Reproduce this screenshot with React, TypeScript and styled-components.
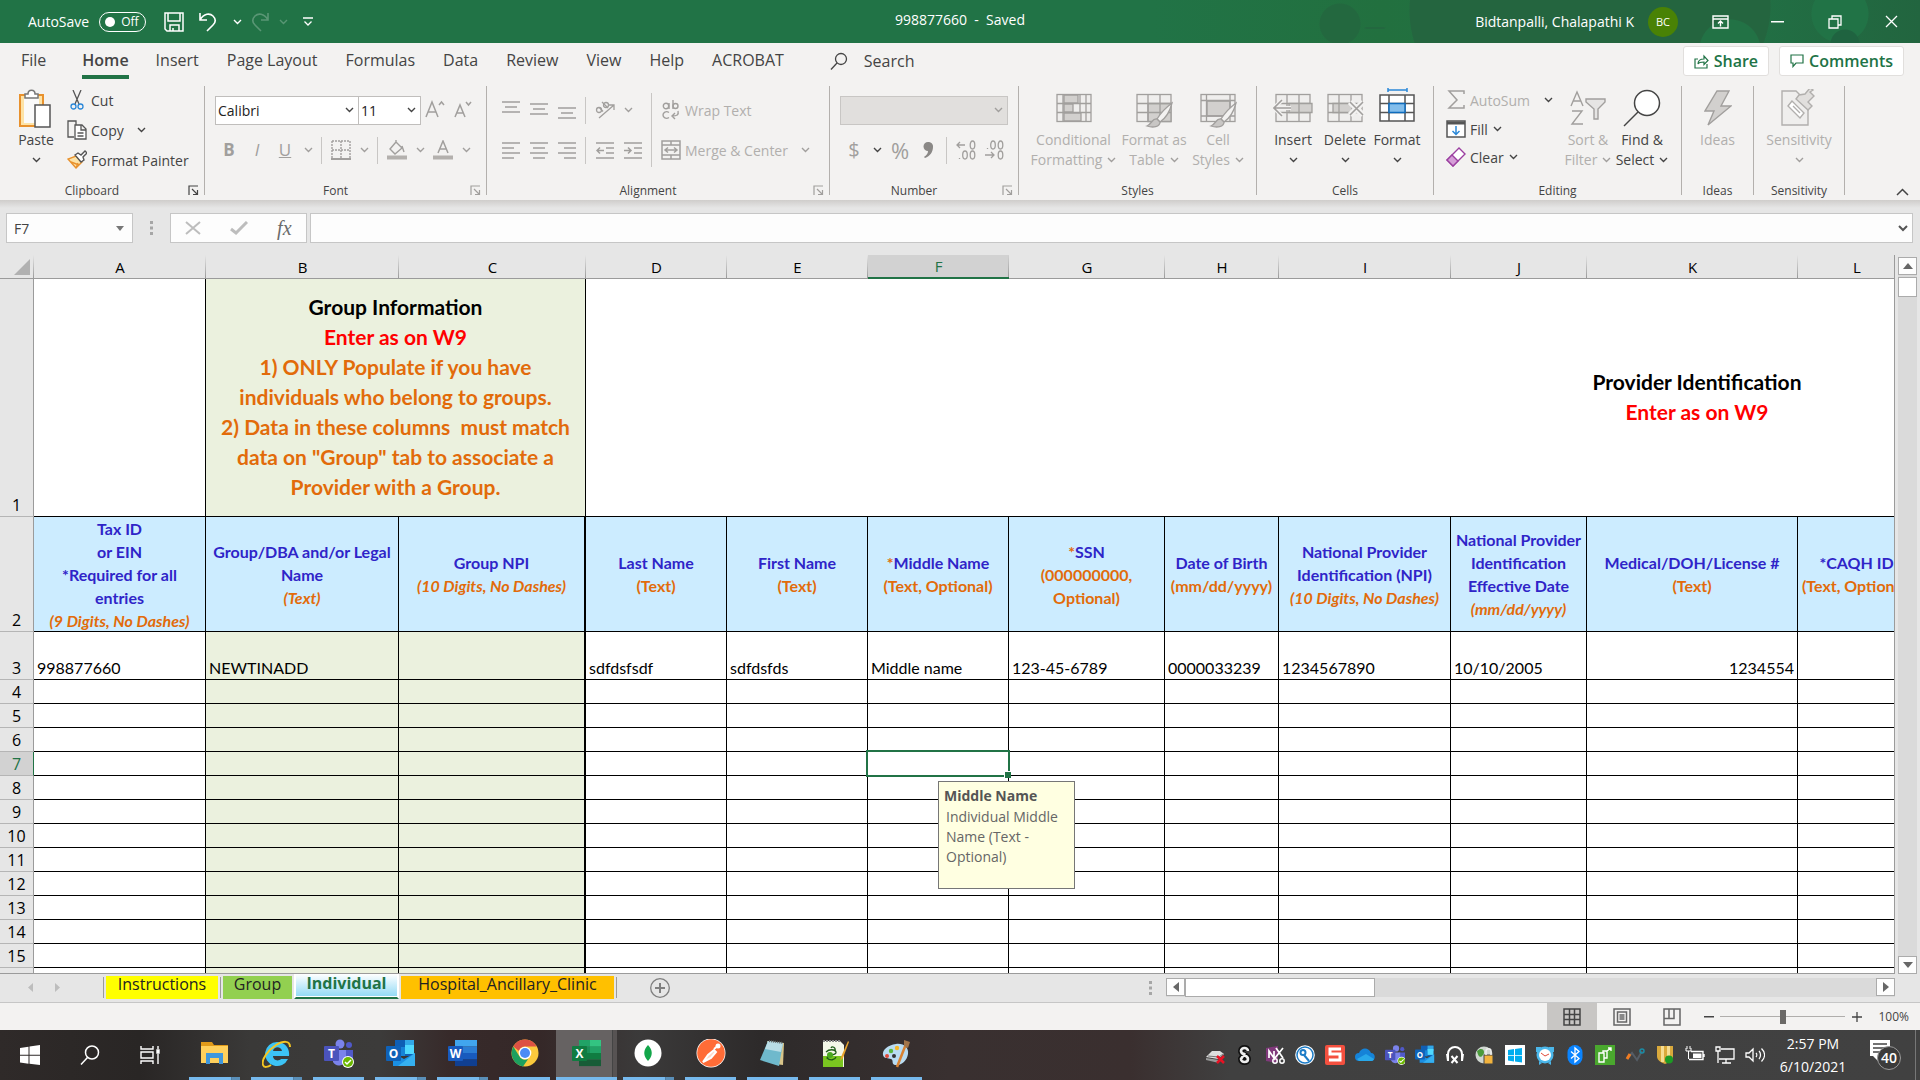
import React from 'react';
import styled, { createGlobalStyle, css } from 'styled-components';

const UI = '"Open Sans", "Noto Sans", sans-serif';
const SHEET = 'Lato, "Open Sans", sans-serif';
const GREEN = '#217346';
const INK = '#444444';
const MUTED = '#b1afad';
const GREY = '#a19f9d';

const Global = createGlobalStyle`
  * { box-sizing: border-box; }
  body { margin: 0; font-family: ${UI}; background: #e6e6e6; }
  button, input, select { font: inherit; color: inherit; }
  button { border: 0; padding: 0; background: none; }
`;

const Window = styled.div`
  display: flex;
  flex-direction: column;
  height: 100vh;
  overflow: hidden;
  font-size: 14px;
  color: ${INK};
`;

/* ---------- shared pieces ---------- */

const ChevronSvg = styled.svg`
  display: block;
  flex: none;
`;
const Chevron = ({ color = INK }: { color?: string }) => (
  <ChevronSvg width="9" height="6" viewBox="0 0 9 6" fill="none" stroke={color} strokeWidth="1.4">
    <path d="M1 1 4.5 4.5 8 1" />
  </ChevronSvg>
);

const Svg = ({ w, h, children, ...rest }: { w: number; h: number; children: React.ReactNode } & React.SVGProps<SVGSVGElement>) => (
  <ChevronSvg as="svg" width={w} height={h} viewBox={`0 0 ${w} ${h}`} fill="none" {...(rest as object)}>
    {children}
  </ChevronSvg>
);

/* ---------- title bar ---------- */

const TitleBar = styled.header`
  display: grid;
  grid-template-columns: 1fr auto 1fr;
  align-items: center;
  height: 43px;
  flex: none;
  color: #fff;
  background:
    radial-gradient(circle at calc(100% - 580px) 24px, #23683f 20px, transparent 21px),
    radial-gradient(ellipse at calc(100% - 545px) 28px, #23683f 26px, transparent 27px),
    radial-gradient(circle at calc(100% - 75px) 44px, #1f6340 14px, transparent 15px),
    radial-gradient(circle at calc(100% - 80px) 14px, #217346 28px, transparent 29px),
    radial-gradient(circle at calc(100% - 190px) 50px, #227245 30px, transparent 31px),
    radial-gradient(circle at calc(100% - 400px) 10px, #24653f 110px, transparent 111px),
    radial-gradient(circle at calc(100% - 250px) 6px, #24653f 100px, transparent 101px),
    linear-gradient(90deg, ${GREEN} 60%, #22703f 72%, #217346 88%, #22653f 100%);
`;
const QuickAccess = styled.div`
  display: flex;
  align-items: center;
  padding-left: 28px;
`;
const AutoSave = styled.label`
  display: flex;
  align-items: center;
  gap: 10px;
  margin-right: 18px;
  font-size: 14px;
`;
const Switch = styled.span`
  display: flex;
  align-items: center;
  gap: 6px;
  width: 47px;
  height: 20px;
  padding-left: 5px;
  border: 1px solid #fff;
  border-radius: 10px;
  font-size: 12px;
`;
const SwitchInput = styled.input`
  appearance: none;
  width: 10px;
  height: 10px;
  margin: 0;
  border-radius: 50%;
  background: #fff;
`;
const QuickButton = styled.button<{ $w: number; $dim?: boolean }>`
  display: flex;
  align-items: center;
  justify-content: center;
  width: ${(p) => p.$w}px;
  height: 30px;
  opacity: ${(p) => (p.$dim ? 0.25 : 1)};
`;
const DocTitle = styled.h1`
  margin: 0;
  padding-bottom: 4px;
  font-size: 14px;
  line-height: 20px;
  font-weight: 400;
  white-space: pre;
`;
const Account = styled.div`
  display: flex;
  align-items: center;
  justify-content: flex-end;
  font-size: 14px;
`;
const Avatar = styled.span`
  display: grid;
  place-items: center;
  width: 30px;
  height: 30px;
  margin: 0 14px;
  border-radius: 50%;
  background: #498205;
  font-size: 11px;
`;
const WindowButton = styled.button`
  display: grid;
  place-items: center;
  width: 57px;
  height: 43px;
`;

const TitleArea = () => (
  <TitleBar>
    <QuickAccess>
      <AutoSave>
        AutoSave
        <Switch>
          <SwitchInput type="checkbox" role="switch" />
          Off
        </Switch>
      </AutoSave>
      <QuickButton $w={20} aria-label="Save">
        <Svg w={20} h={20} stroke="#fff" strokeWidth="1.5">
          <path d="M1 1h18v18H3l-2-2zM4 1v8h12V1M6 19v-6h9v6M9 19v-3" />
        </Svg>
      </QuickButton>
      <QuickButton $w={48} aria-label="Undo">
        <Svg w={20} h={20} stroke="#fff" strokeWidth="1.6">
          <path d="M2 1v7h7M2 8c4-7 10-7 13-4s3 6 0 9l-6 6" />
        </Svg>
      </QuickButton>
      <QuickButton $w={10} aria-label="Undo history">
        <Chevron color="#fff" />
      </QuickButton>
      <QuickButton $w={36} $dim aria-label="Redo">
        <Svg w={20} h={20} stroke="#fff" strokeWidth="1.6">
          <path d="M18 1v7h-7M18 8C14 1 8 1 5 4s-3 6 0 9l6 6" />
        </Svg>
      </QuickButton>
      <QuickButton $w={10} $dim aria-label="Redo history">
        <Chevron color="#fff" />
      </QuickButton>
      <QuickButton $w={40} aria-label="Customize toolbar">
        <Svg w={10} h={10} stroke="#fff" strokeWidth="1.3">
          <path d="M0 1h10M1.500 4.500 5 8l3.500-3.500" />
        </Svg>
      </QuickButton>
    </QuickAccess>
    <DocTitle>998877660  -  Saved</DocTitle>
    <Account>
      Bidtanpalli, Chalapathi K
      <Avatar>BC</Avatar>
      <WindowButton aria-label="Ribbon display options">
        <Svg w={17} h={14} stroke="#fff" strokeWidth="1.4">
          <path d="M1 1h15v12H1zM1 4h15M8.500 11.500V6M6 8.500 8.500 6 11 8.500" />
        </Svg>
      </WindowButton>
      <WindowButton aria-label="Minimize">
        <Svg w={13} h={2} fill="#fff"><rect width="13" height="1.500" /></Svg>
      </WindowButton>
      <WindowButton aria-label="Restore">
        <Svg w={14} h={14} stroke="#fff" strokeWidth="1.3">
          <path d="M1 4h9v9H1zM4 4V1h9v9h-3" />
        </Svg>
      </WindowButton>
      <WindowButton aria-label="Close">
        <Svg w={13} h={13} stroke="#fff" strokeWidth="1.3"><path d="m1 1 11 11M12 1 1 12" /></Svg>
      </WindowButton>
    </Account>
  </TitleBar>
);

/* ---------- ribbon tabs ---------- */

const TabRow = styled.nav`
  display: flex;
  align-items: center;
  height: 42px;
  flex: none;
  padding: 0 16px 6px 7px;
  background: #f3f2f1;
  font-size: 16px;
`;
const RibbonTab = styled.button<{ $active?: boolean }>`
  height: 36px;
  margin: 0 14px;
  padding-top: 2px;
  white-space: nowrap;
  border-bottom: 4px solid transparent;
  ${(p) => p.$active && css`
    font-weight: 600;
    margin: 0 13px 0 22px;
    border-bottom-color: ${GREEN};
  `}
`;
const SearchBox = styled.label`
  display: flex;
  align-items: center;
  gap: 16px;
  margin-left: 32px;
  flex: 1;
`;
const SearchInput = styled.input`
  width: 160px;
  padding: 0;
  border: 0;
  outline: 0;
  background: none;
  &::placeholder { color: ${INK}; opacity: 1; }
`;
const ActionButton = styled.button`
  display: flex;
  align-items: center;
  gap: 5px;
  height: 30px;
  margin-left: 10px;
  padding: 0 10px;
  border: 1px solid #e1dfdd;
  border-radius: 3px;
  background: #fff;
  color: ${GREEN};
  font-weight: 600;
`;

const tabsBefore = ['File'];
const tabsAfter = ['Insert', 'Page Layout', 'Formulas', 'Data', 'Review', 'View', 'Help', 'ACROBAT'];

const Tabs = () => (
  <TabRow>
    {tabsBefore.map((t) => <RibbonTab key={t}>{t}</RibbonTab>)}
    <RibbonTab $active>Home</RibbonTab>
    {tabsAfter.map((t) => <RibbonTab key={t}>{t}</RibbonTab>)}
    <SearchBox>
      <Svg w={18} h={18} stroke={INK} strokeWidth="1.3">
        <circle cx="11" cy="7" r="5.500" /><path d="m7 11-6 6.500" />
      </Svg>
      <SearchInput placeholder="Search" aria-label="Search" />
    </SearchBox>
    <ActionButton>
      <Svg w={15} h={15} stroke={GREEN} strokeWidth="1.2">
        <path d="M4 5H1v9h12v-4M4 10c0-4 3-5 6-5V2l4 4.500-4 4V8c-3 0-5 0-6 2z" />
      </Svg>
      Share
    </ActionButton>
    <ActionButton>
      <Svg w={14} h={14} stroke={GREEN} strokeWidth="1.2"><path d="M1 1h12v8H6l-3 3.500V9H1z" /></Svg>
      Comments
    </ActionButton>
  </TabRow>
);

/* ---------- ribbon ---------- */

const RibbonBar = styled.div`
  display: flex;
  height: 115px;
  flex: none;
  background: #f3f2f1;
`;
const GroupBox = styled.section`
  display: flex;
  flex-direction: column;
`;
const GroupBody = styled.div<{ $pad?: number }>`
  display: flex;
  height: 96px;
  padding: 0 ${(p) => p.$pad ?? 10}px;
`;
const GroupFooter = styled.div`
  display: flex;
  align-items: center;
  height: 18px;
  font-size: 12px;
`;
const GroupName = styled.span`
  flex: 1;
  text-align: center;
`;
const Launcher = styled.button`
  width: 20px;
  height: 12px;
  padding-left: 4px;
`;
const GroupLine = styled.div`
  width: 1px;
  height: 109px;
  margin-top: 1px;
  background: #b3b0ad;
`;
const Stack = styled.div<{ $top?: number; $gap?: number; $w?: number }>`
  display: flex;
  flex-direction: column;
  align-items: flex-start;
  padding-top: ${(p) => p.$top ?? 0}px;
  gap: ${(p) => p.$gap ?? 0}px;
  width: ${(p) => (p.$w ? `${p.$w}px` : 'auto')};
`;
const Row = styled.div`
  display: flex;
  align-items: center;
  height: 30px;
`;
const BigButton = styled.button<{ $w: number; $off?: boolean }>`
  display: flex;
  flex-direction: column;
  align-items: center;
  width: ${(p) => p.$w}px;
  padding-top: 3px;
  line-height: 20px;
  color: ${(p) => (p.$off ? MUTED : INK)};
  white-space: nowrap;
`;
const BigIcon = styled.span`
  display: grid;
  place-items: center;
  height: 40px;
  margin-bottom: 2px;
`;
const BigLine = styled.span`
  display: flex;
  align-items: center;
  gap: 5px;
  height: 20px;
`;
const LineButton = styled.button<{ $h?: number; $off?: boolean; $gap?: number }>`
  display: flex;
  align-items: center;
  gap: ${(p) => p.$gap ?? 5}px;
  height: ${(p) => p.$h ?? 30}px;
  color: ${(p) => (p.$off ? MUTED : INK)};
  white-space: nowrap;
`;
const LineIcon = styled.span`
  display: grid;
  place-items: center;
  width: 24px;
  margin-right: -3px;
`;
const Tool = styled.button<{ $size?: number }>`
  display: grid;
  place-items: center;
  width: 28px;
  height: 28px;
  color: ${GREY};
  font-size: ${(p) => p.$size ?? 17}px;
  line-height: 28px;
`;
const Drop = styled.button<{ $apart?: boolean }>`
  display: grid;
  place-items: center;
  width: 18px;
  height: 28px;
  margin-left: ${(p) => (p.$apart ? 9 : 0)}px;
`;
const Split = styled.span`
  width: 1px;
  height: 27px;
  margin: 0 5px 0 4px;
  background: #c8c6c4;
`;
const TallSplit = styled.span`
  width: 1px;
  height: 74px;
  margin: 8px 7px 0 4px;
  background: #c8c6c4;
`;
const Picker = styled.span<{ $w: number; $off?: boolean }>`
  display: flex;
  align-items: center;
  width: ${(p) => p.$w}px;
  height: 29px;
  padding-right: 4px;
  border: 1px solid ${(p) => (p.$off ? '#c8c6c4' : '#c0bebc')};
  background: ${(p) => (p.$off ? '#e1dfdd' : '#fff')};
  & + & { border-left: 0; }
`;
const PickerSelect = styled.select`
  flex: 1;
  min-width: 0;
  height: 27px;
  padding: 0 2px;
  border: 0;
  appearance: none;
  background: none;
  color: #222;
`;

const LaunchIcon = ({ color = GREY }: { color?: string }) => (
  <Svg w={11} h={11} stroke={color} strokeWidth="1.2"><path d="M1 10V1h9M4 4l5 5M9.500 5v4.500H5" /></Svg>
);

const Group = ({ name, pad, launch, children }: { name: string; pad?: number; launch?: string; children: React.ReactNode }) => (
  <>
    <GroupBox aria-label={name}>
      <GroupBody $pad={pad}>{children}</GroupBody>
      <GroupFooter>
        <GroupName>{name}</GroupName>
        {launch && <Launcher aria-label={`${name} settings`}><LaunchIcon color={launch} /></Launcher>}
      </GroupFooter>
    </GroupBox>
    <GroupLine />
  </>
);

const Lines = ({ d }: { d: string }) => (
  <Svg w={18} h={18} stroke={GREY} strokeWidth="1.500"><path d={d} /></Svg>
);

const GridIcon = ({ fillCells, over }: { fillCells: React.ReactNode; over?: React.ReactNode }) => (
  <Svg w={40} h={40} stroke={GREY} strokeWidth="1.300">
    <rect x="3" y="6.500" width="34" height="27" fill="#efeeed" />
    {fillCells}
    {over}
  </Svg>
);
const Brush = () => (
  <>
    <path d="M38 15c-8 6-12 11-15 16l3 3c6-4 10-11 12-19z" fill="#f3f2f1" />
    <path d="M23 31c-5-1-5 5-10 7 6 2 13 1 13-4z" fill="#c8c6c4" />
  </>
);

const Ribbon = () => (
  <RibbonBar>
    <Group name="Clipboard" pad={7} launch={INK}>
      <BigButton $w={58}>
        <BigIcon>
          <Svg w={36} h={40} strokeWidth="1.500">
            <path d="M2 7h23v31H2z" fill="#fde3a7" stroke="#e8912d" strokeWidth="2" />
            <path d="M6 10h15v25H6z" fill="#fafafa" />
            <path d="M7 10V6h3c0-5 7-5 7 0h3v4z" fill="#fff" stroke="#777" />
            <path d="M17 17h15v22H17z" fill="#fff" stroke="#555" />
          </Svg>
        </BigIcon>
        <BigLine>Paste</BigLine>
        <BigLine><Chevron /></BigLine>
      </BigButton>
      <Stack $w={132}>
        <LineButton>
          <LineIcon>
            <Svg w={14} h={20} stroke="#555" strokeWidth="1.300">
              <path d="M3 0l6 14M11 0 5 14" />
              <circle cx="3.500" cy="16.500" r="2.500" stroke="#2b88d8" /><circle cx="10.500" cy="16.500" r="2.500" stroke="#2b88d8" />
            </Svg>
          </LineIcon>
          Cut
        </LineButton>
        <Row>
          <LineButton>
            <LineIcon>
              <Svg w={20} h={20} stroke="#555" strokeWidth="1.300">
                <path d="M7 17H1V1h8v4" /><path d="M8 5h7l4 4v10H8zM14 5v5h5M10.500 13h6M10.500 16h6" fill="#fff" />
              </Svg>
            </LineIcon>
            Copy
          </LineButton>
          <Drop $apart aria-label="Copy options"><Chevron /></Drop>
        </Row>
        <LineButton>
          <LineIcon>
            <Svg w={20} h={20} strokeWidth="1.400">
              <path d="M1 9l8 9 6-6-6-6z" fill="#fde3a7" stroke="#e8912d" /><path d="M4 12l8 3M9 18l2-5" stroke="#e8912d" />
              <path d="M8 5l3-2 3 2 4-4 2 2-4 4 1 3-3 2z" fill="#fff" stroke="#555" />
            </Svg>
          </LineIcon>
          Format Painter
        </LineButton>
      </Stack>
    </Group>

    <Group name="Font" launch={GREY}>
      <Stack $top={10} $gap={10} $w={261}>
        <Row>
          <Picker $w={144}>
            <PickerSelect aria-label="Font name"><option>Calibri</option></PickerSelect>
            <Chevron />
          </Picker>
          <Picker $w={62}>
            <PickerSelect aria-label="Font size"><option>11</option></PickerSelect>
            <Chevron />
          </Picker>
          <Tool aria-label="Increase font size">
            <Svg w={20} h={20} stroke={GREY} strokeWidth="1.500"><path d="M1 17 7 2l6 15M3 12h8M14 5l2.500-3L19 5" /></Svg>
          </Tool>
          <Tool aria-label="Decrease font size">
            <Svg w={18} h={20} stroke={GREY} strokeWidth="1.500"><path d="M1 17 6 5l5 12M3 13h6M12 2l2.500 3L17 2" /></Svg>
          </Tool>
        </Row>
        <Row>
          <Tool aria-label="Bold"><b>B</b></Tool>
          <Tool aria-label="Italic"><i>I</i></Tool>
          <Tool aria-label="Underline"><u>U</u></Tool>
          <Drop aria-label="Underline style"><Chevron color={GREY} /></Drop>
          <Split />
          <Tool aria-label="Borders">
            <Svg w={20} h={20} stroke={GREY} strokeWidth="1.400">
              <path d="M1 1h18M1 10h18M1 1v17M10 1v17M19 1v17" strokeDasharray="2 1" /><path d="M0 19h20" strokeWidth="2" />
            </Svg>
          </Tool>
          <Drop aria-label="Border style"><Chevron color={GREY} /></Drop>
          <Split />
          <Tool aria-label="Fill color">
            <Svg w={20} h={20} stroke={GREY} strokeWidth="1.400">
              <path d="M9 2 3 9l5 5 7-6-6-6zM9 2V0M15 6l2 6" /><path d="M0 17.500h20" strokeWidth="4" stroke="#b3b0ad" />
            </Svg>
          </Tool>
          <Drop aria-label="Fill color options"><Chevron color={GREY} /></Drop>
          <Tool aria-label="Font color">
            <Svg w={20} h={20} stroke={GREY} strokeWidth="1.500">
              <path d="M5 13 10 1l5 12M7 9h6" /><path d="M0 17.500h20" strokeWidth="4" stroke="#b3b0ad" />
            </Svg>
          </Tool>
          <Drop aria-label="Font color options"><Chevron color={GREY} /></Drop>
        </Row>
      </Stack>
    </Group>

    <Group name="Alignment" launch={GREY}>
      <Stack $top={10} $gap={10}>
        <Row>
          <Tool aria-label="Top align"><Lines d="M0 1h18M3 6h12M0 11h18" /></Tool>
          <Tool aria-label="Middle align"><Lines d="M0 3h18M3 8h12M0 13h18" /></Tool>
          <Tool aria-label="Bottom align"><Lines d="M0 7h18M3 12h12M0 17h18" /></Tool>
          <Split />
          <Tool aria-label="Orientation">
            <Svg w={20} h={20} stroke={GREY} strokeWidth="1.300">
              <path d="M4 18 19 5M14 5h5v5" />
              <circle cx="4" cy="10" r="2.500" /><path d="m4.500 7.500 3.500 4M7 2l6 6" /><circle cx="11" cy="5" r="2.500" />
            </Svg>
          </Tool>
          <Drop aria-label="Orientation options"><Chevron color={GREY} /></Drop>
        </Row>
        <Row>
          <Tool aria-label="Align left"><Lines d="M0 2h18M0 7h12M0 12h18M0 17h12" /></Tool>
          <Tool aria-label="Center"><Lines d="M0 2h18M3 7h12M0 12h18M3 17h12" /></Tool>
          <Tool aria-label="Align right"><Lines d="M0 2h18M6 7h12M0 12h18M6 17h12" /></Tool>
          <Split />
          <Tool aria-label="Decrease indent"><Lines d="M0 2h18M10 7h8M10 12h8M0 17h18M8 9.500H1M4 6.500l-3 3 3 3" /></Tool>
          <Tool aria-label="Increase indent"><Lines d="M0 2h18M10 7h8M10 12h8M0 17h18M0 9.500h7M4 6.500l3 3-3 3" /></Tool>
        </Row>
      </Stack>
      <TallSplit />
      <Stack $top={10} $gap={10} $w={160}>
        <LineButton $off>
          <LineIcon>
            <Svg w={18} h={20} stroke={GREY} strokeWidth="1.400">
              <circle cx="4" cy="6" r="2.700" /><path d="M7 3v6M11 0v9" /><circle cx="13.500" cy="6" r="2.500" />
              <path d="M7 12.500c-3-2-6 0-6 2.500s3 4.500 6 2.500M16 11c1 4-1 5-6 5M13 13l-3 3 3 3" />
            </Svg>
          </LineIcon>
          Wrap Text
        </LineButton>
        <Row>
          <LineButton $off>
            <LineIcon>
              <Svg w={20} h={20} stroke={GREY} strokeWidth="1.500">
                <path d="M1 1h18v18H1zM1 5h18M1 15h18M10 1v4M10 15v4" /><path d="M4 10h12M7 7.500 4 10l3 2.500M13 7.500l3 2.500-3 2.500" />
              </Svg>
            </LineIcon>
            Merge &amp; Center
          </LineButton>
          <Drop $apart aria-label="Merge options"><Chevron color={GREY} /></Drop>
        </Row>
      </Stack>
    </Group>

    <Group name="Number" launch={GREY}>
      <Stack $top={10} $gap={10}>
        <Row>
          <Picker $w={168} $off>
            <PickerSelect aria-label="Number format" disabled />
            <Chevron color={GREY} />
          </Picker>
        </Row>
        <Row>
          <Tool $size={20} aria-label="Accounting format">$</Tool>
          <Drop aria-label="Accounting options"><Chevron /></Drop>
          <Tool $size={22} aria-label="Percent">%</Tool>
          <Tool aria-label="Comma style">
            <Svg w={10} h={16} fill="#8a8886"><path d="M5 0a4.500 4.500 0 0 1 5 5c0 5-3 9-8 11l-1-1c3-2 4-4 4-6a4.500 4.500 0 0 1 0-9z" /></Svg>
          </Tool>
          <Split />
          <Tool aria-label="Increase decimal">
            <Svg w={20} h={20} stroke={GREY} strokeWidth="1.300">
              <path d="M9 5H1M4 2 1 5l3 3M3.500 18v1" /><ellipse cx="16.500" cy="5" rx="2.300" ry="4" />
              <ellipse cx="9" cy="15" rx="2.300" ry="4" /><ellipse cx="16.500" cy="15" rx="2.300" ry="4" />
            </Svg>
          </Tool>
          <Tool aria-label="Decrease decimal">
            <Svg w={20} h={20} stroke={GREY} strokeWidth="1.300">
              <path d="M1 15h9M7 12l3 3-3 3M3.500 8v1" /><ellipse cx="9" cy="5" rx="2.300" ry="4" />
              <ellipse cx="16.500" cy="5" rx="2.300" ry="4" /><ellipse cx="16.500" cy="15" rx="2.300" ry="4" />
            </Svg>
          </Tool>
        </Row>
      </Stack>
    </Group>

    <Group name="Styles">
      <BigButton $w={89} $off>
        <BigIcon>
          <GridIcon fillCells={<>
            <path d="M3 15.500h34M3 24.500h34M9 6.500v27M26 6.500v27M32 6.500v27" />
            <path d="M10 7h14v8H10zM10 16h9v8h-9zM10 25h17v8H10z" fill="#d2d0ce" />
          </>} />
        </BigIcon>
        <BigLine>Conditional</BigLine>
        <BigLine>Formatting <Chevron color={GREY} /></BigLine>
      </BigButton>
      <BigButton $w={72} $off>
        <BigIcon>
          <GridIcon fillCells={<><path d="M14 15.500h23v18H14z" fill="#d2d0ce" /><path d="M3 15.500h34M3 24.500h34M14 6.500v27M26 6.500v27" /></>} over={<Brush />} />
        </BigIcon>
        <BigLine>Format as</BigLine>
        <BigLine>Table <Chevron color={GREY} /></BigLine>
      </BigButton>
      <BigButton $w={56} $off>
        <BigIcon>
          <GridIcon fillCells={<><path d="M9 13h23v15H9z" fill="#d2d0ce" /><path d="M3 12.500h34M3 28h34M8.500 6.500v27M32 6.500v27" /></>} over={<Brush />} />
        </BigIcon>
        <BigLine>Cell</BigLine>
        <BigLine>Styles <Chevron color={GREY} /></BigLine>
      </BigButton>
    </Group>

    <Group name="Cells">
      <BigButton $w={52}>
        <BigIcon>
          <GridIcon
            fillCells={<><path d="M3 15.500h34M3 24.500h34M14 6.500v27M26 6.500v27" /><path d="M16 15.500h23v9H16zM26 15.500v9" fill="#d2d0ce" /></>}
            over={<><path d="M18 20H2M9 12l-8 8 8 8" stroke="#f3f2f1" strokeWidth="4" /><path d="M18 20H2M9 12l-8 8 8 8" strokeWidth="1.600" /></>}
          />
        </BigIcon>
        <BigLine>Insert</BigLine>
        <BigLine><Chevron /></BigLine>
      </BigButton>
      <BigButton $w={52}>
        <BigIcon>
          <GridIcon
            fillCells={<><path d="M3 15.500h34M3 24.500h34M14 6.500v9M26 6.500v9M14 24.500v9M26 24.500v9" /><path d="M8 15.500h19v9H8zM14 15.500v9" fill="#d2d0ce" /></>}
            over={<><path d="m25 14 13 13M38 14 25 27" stroke="#f3f2f1" strokeWidth="6" /><path d="m25 14 13 13M38 14 25 27" strokeWidth="1.600" /></>}
          />
        </BigIcon>
        <BigLine>Delete</BigLine>
        <BigLine><Chevron /></BigLine>
      </BigButton>
      <BigButton $w={52}>
        <BigIcon>
          <Svg w={40} h={40} stroke="#555" strokeWidth="1.500">
            <path d="M3 7h34v26H3z" fill="#fff" />
            <path d="M3 15.500h34M3 24.500h34M12 7v26M28 7v26" />
            <path d="M12 15.500h16v9H12z" fill="#83beec" stroke="#0f6cbd" />
            <path d="M11 2h19M11 0v4M30 0v4" stroke="#2b88d8" />
          </Svg>
        </BigIcon>
        <BigLine>Format</BigLine>
        <BigLine><Chevron /></BigLine>
      </BigButton>
    </Group>

    <Group name="Editing">
      <Stack $w={119}>
        <Row>
          <LineButton $h={29} $off>
            <LineIcon>
              <Svg w={18} h={20} stroke={GREY} strokeWidth="1.500"><path d="M17 4V1H2l8 9-8 8h15v-3" /></Svg>
            </LineIcon>
            AutoSum
          </LineButton>
          <Drop $apart aria-label="AutoSum options"><Chevron /></Drop>
        </Row>
        <LineButton $h={28}>
          <LineIcon>
            <Svg w={20} h={18} stroke="#555" strokeWidth="1.500">
              <path d="M1 1h18v16H1z" fill="#fff" /><path d="M1 3h18" strokeWidth="3" /><path d="M10 6v8M6.500 11l3.500 3.500 3.500-3.500" stroke="#2b88d8" />
            </Svg>
          </LineIcon>
          Fill <Chevron />
        </LineButton>
        <LineButton $h={28}>
          <LineIcon>
            <Svg w={20} h={20} stroke="#9b3fa0" strokeWidth="1.400">
              <path d="M13 1 1 13l6 6L19 7z" fill="#fff" /><path d="M6 8l-5 5 6 6 5-5z" fill="#d59ed7" />
            </Svg>
          </LineIcon>
          Clear <Chevron />
        </LineButton>
      </Stack>
      <BigButton $w={50} $off>
        <BigIcon>
          <Svg w={38} h={38} stroke={GREY} strokeWidth="1.400">
            <path d="M2 17 8 3l6 14M4 12h8M3 22h10L3 35h11" />
            <path d="M17 10h19v3l-7 7v10h-4V20l-8-7z" fill="#e6e5e4" />
          </Svg>
        </BigIcon>
        <BigLine>Sort &amp;</BigLine>
        <BigLine>Filter <Chevron color={GREY} /></BigLine>
      </BigButton>
      <BigButton $w={58}>
        <BigIcon>
          <Svg w={38} h={38} stroke={INK} strokeWidth="1.500">
            <circle cx="24" cy="14" r="12.500" fill="#fff" /><path d="M15 23 1 37" />
          </Svg>
        </BigIcon>
        <BigLine>Find &amp;</BigLine>
        <BigLine>Select <Chevron /></BigLine>
      </BigButton>
    </Group>

    <Group name="Ideas" pad={0}>
      <BigButton $w={71} $off>
        <BigIcon>
          <Svg w={28} h={36} stroke={GREY} strokeWidth="1.400"><path d="M13 1h12l-8 15h10L4 35l6-14H1z" fill="#d2d0ce" /></Svg>
        </BigIcon>
        <BigLine>Ideas</BigLine>
      </BigButton>
    </Group>

    <Group name="Sensitivity" pad={0}>
      <BigButton $w={90} $off>
        <BigIcon>
          <Svg w={36} h={38} stroke={MUTED} strokeWidth="1.400">
            <path d="M1 2h14l12 12v22H1z" fill="#efeeed" />
            <path d="M11 12 7 17l12 12 4-5zM12 17l7 7" fill="#fff" />
            <path d="M18 6l-3 4 12 11 4-4-4-4 6-6-4-4 3-2-3-2-5 6z" fill="#e1dfdd" />
          </Svg>
        </BigIcon>
        <BigLine>Sensitivity</BigLine>
        <BigLine><Chevron color={GREY} /></BigLine>
      </BigButton>
    </Group>
    <Collapse aria-label="Collapse ribbon">
      <Svg w={13} h={8} stroke={INK} strokeWidth="1.500"><path d="M1 7l5.500-5.500L12 7" /></Svg>
    </Collapse>
  </RibbonBar>
);
const Collapse = styled.button`
  align-self: flex-end;
  margin: 0 11px 4px auto;
`;

/* ---------- formula bar ---------- */

const FormulaRow = styled.div`
  display: flex;
  height: 55px;
  flex: none;
  padding: 13px 7px 12px 6px;
  background: linear-gradient(#cfcdcb, #e6e6e6 8px);
`;
const NameBox = styled.label`
  display: flex;
  align-items: center;
  width: 127px;
  padding: 0 8px 0 7px;
  border: 1px solid #c6c6c6;
  background: #fdfdfd;
`;
const PlainInput = styled.input`
  flex: 1;
  min-width: 0;
  border: 0;
  padding: 0;
  outline: 0;
  background: none;
`;
const Grip = styled.span`
  display: grid;
  place-items: center;
  width: 37px;
`;
const FxBox = styled.div`
  display: flex;
  align-items: center;
  justify-content: space-around;
  width: 137px;
  margin-right: 3px;
  border: 1px solid #c6c6c6;
  background: #fdfdfd;
`;
const FxButton = styled.button`
  font: italic 20px/26px "Liberation Serif", serif;
  color: #6b6b6b;
`;
const FormulaBox = styled.label`
  display: flex;
  align-items: center;
  flex: 1;
  padding: 0 4px;
  border: 1px solid #c6c6c6;
  background: #fdfdfd;
`;
const GripDots = () => (
  <Svg w={3} h={14} fill="#a6a6a6"><path d="M0 0h3v3H0zM0 5.500h3v3H0zM0 11h3v3H0z" /></Svg>
);

const FormulaBar = () => (
  <FormulaRow>
    <NameBox>
      <PlainInput aria-label="Name box" defaultValue="F7" />
      <Svg w={8} h={5} fill="#777"><path d="M0 0h8L4 5z" /></Svg>
    </NameBox>
    <Grip><GripDots /></Grip>
    <FxBox>
      <button aria-label="Cancel"><Svg w={16} h={14} stroke="#bdbdbd" strokeWidth="2"><path d="m1 1 14 12M15 1 1 13" /></Svg></button>
      <button aria-label="Enter"><Svg w={18} h={14} stroke="#bdbdbd" strokeWidth="3"><path d="m1 8 5 4L17 1" /></Svg></button>
      <FxButton aria-label="Insert function">fx</FxButton>
    </FxBox>
    <FormulaBox>
      <PlainInput aria-label="Formula" />
      <Svg w={10} h={7} stroke="#555" strokeWidth="2"><path d="m1 1 4 4 4-4" /></Svg>
    </FormulaBox>
  </FormulaRow>
);

/* ---------- sheet ---------- */

const Workspace = styled.main`
  display: flex;
  flex: 1;
  min-height: 0;
  background: #e6e6e6;
`;
const SheetView = styled.div`
  flex: 1;
  min-width: 0;
  overflow: hidden;
  border-right: 1px solid #9b9b9b;
  border-bottom: 1px solid #9b9b9b;
`;
const columns: [string, number][] = [
  ['A', 172], ['B', 193], ['C', 187], ['D', 141], ['E', 141], ['F', 141], ['G', 156],
  ['H', 114], ['I', 172], ['J', 136], ['K', 211], ['L', 118], ['', 893],
];
const Sheet = styled.table<{ $w: number }>`
  width: ${(p) => p.$w}px;
  table-layout: fixed;
  border-collapse: separate;
  border-spacing: 0;
  background: #fff;
  font-family: ${SHEET};
  font-size: 16px;
  line-height: 22px;
  color: #000;
`;
const Col = styled.col<{ $w: number }>`
  width: ${(p) => p.$w}px;
`;
const ColHead = styled.th<{ $on?: boolean }>`
  height: 24px;
  padding: 0;
  border-bottom: 1px solid #9b9b9b;
  background:
    linear-gradient(transparent, #9b9b9b) right / 1px 100% no-repeat,
    ${(p) => (p.$on ? '#d2d2d2' : '#e6e6e6')};
  font-family: ${UI};
  font-size: 15px;
  font-weight: 400;
  ${(p) => p.$on && css`
    border-bottom: 2px solid ${GREEN};
    color: ${GREEN};
  `}
`;
const Corner = styled(ColHead)`
  background: linear-gradient(transparent, #9b9b9b) right / 1px 100% no-repeat, #e6e6e6;
`;
const CornerMark = styled.svg`
  display: block;
  margin-left: 14px;
`;
const RowHead = styled.th<{ $h: number; $on?: boolean }>`
  height: ${(p) => p.$h}px;
  padding: 0;
  vertical-align: bottom;
  font-family: ${UI};
  font-weight: 400;
  border-right: 1px solid ${(p) => (p.$on ? GREEN : '#9b9b9b')};
  border-bottom: 1px solid #b5b5b5;
  color: ${(p) => (p.$on ? GREEN : '#000')};
  background: ${(p) => (p.$on ? '#d2d2d2' : '#e6e6e6')};
`;
const Cell = styled.td<{ $tint?: boolean; $thick?: boolean; $right?: boolean }>`
  position: relative;
  padding: 0 3px;
  vertical-align: bottom;
  white-space: nowrap;
  text-align: ${(p) => (p.$right ? 'right' : 'left')};
  border-right: ${(p) => (p.$thick ? 2 : 1)}px solid #000;
  border-bottom: 1px solid #000;
  background: ${(p) => (p.$tint ? '#ebf1de' : '#fff')};
`;
const BannerCell = styled(Cell)`
  padding: 0 8px 2px;
  vertical-align: middle;
  text-align: center;
  white-space: normal;
  font-size: 21px;
  line-height: 30px;
  font-weight: 700;
`;
const HeadCell = styled(Cell)`
  padding: 0;
  background: #ccecff;
`;
const HeadText = styled.div`
  display: flex;
  flex-direction: column;
  align-items: center;
  justify-content: center;
  height: 114px;
  overflow: hidden;
  font-size: 16px;
  line-height: 23px;
  font-weight: 700;
  color: #2f24c8;
`;
const Line = styled.div<{ $tone?: string; $italic?: boolean }>`
  color: ${(p) => p.$tone ?? 'inherit'};
  font-style: ${(p) => (p.$italic ? 'italic' : 'normal')};
  white-space: pre;
`;
const ORANGE = '#e26b0a';
const Star = styled.span`
  color: ${ORANGE};
`;
const Selection = styled.div`
  position: absolute;
  inset: -2px -2px -2px -2px;
  border: 2px solid ${GREEN};
  z-index: 1;
  &::after {
    content: '';
    position: absolute;
    right: -3px;
    bottom: -3px;
    width: 6px;
    height: 6px;
    background: ${GREEN};
    border: solid #fff;
    border-width: 1px 0 0 1px;
  }
`;
const Tip = styled.div`
  position: absolute;
  z-index: 2;
  left: 70px;
  top: 29px;
  width: 137px;
  height: 108px;
  padding: 4px 5px;
  border: 1px solid #767676;
  background: #ffffe1;
  color: #666;
  font: 14px/20px ${UI};
  white-space: normal;
`;
const TipTitle = styled.strong`
  display: block;
  margin-bottom: 1px;
  color: #555;
`;
const TipText = styled.p`
  margin: 0;
  padding-left: 2px;
`;

const headings: { lines: [string, ('o' | 'i')?][]; star?: boolean }[] = [
  { lines: [['Tax ID'], ['or EIN'], ['*Required for all'], ['entries'], ['(9 Digits, No Dashes)', 'i']] },
  { lines: [['Group/DBA and/or Legal'], ['Name'], ['(Text)', 'i']] },
  { lines: [['Group NPI'], ['(10 Digits, No Dashes)', 'i']] },
  { lines: [['Last Name'], ['(Text)', 'o']] },
  { lines: [['First Name'], ['(Text)', 'o']] },
  { lines: [['Middle Name'], ['(Text, Optional)', 'o']], star: true },
  { lines: [['SSN'], ['(000000000,', 'o'], ['Optional)', 'o']], star: true },
  { lines: [['Date of Birth'], ['(mm/dd/yyyy)', 'o']] },
  { lines: [['National Provider'], ['Identification (NPI)'], ['(10 Digits, No Dashes)', 'i']] },
  { lines: [['National Provider'], ['Identification'], ['Effective Date'], ['(mm/dd/yyyy)', 'i']] },
  { lines: [['Medical/DOH/License #'], ['(Text)', 'o']] },
  { lines: [['*CAQH ID'], ['(Text, Optional)', 'o']] },
  { lines: [] },
];
const record = ['998877660', 'NEWTINADD', '', 'sdfdsfsdf', 'sdfdsfds', 'Middle name', '123-45-6789', '0000033239', '1234567890', '10/10/2005', '1234554', '', ''];
const emptyRows = [...Array.from({ length: 12 }, (_, i) => i + 4), null];

const Grid = () => (
  <SheetView>
    <Sheet $w={34 + columns.reduce((sum, c) => sum + c[1], 0)}>
      <colgroup>
        <Col $w={34} />
        {columns.map(([n, w]) => <Col key={n} $w={w} />)}
      </colgroup>
      <thead>
        <tr>
          <Corner aria-label="Select all">
            <CornerMark width="16" height="16" viewBox="0 0 16 16"><path d="M16 0v16H0z" fill="#b1b1b1" /></CornerMark>
          </Corner>
          {columns.map(([n]) => <ColHead key={n} scope="col" $on={n === 'F'}>{n}</ColHead>)}
        </tr>
      </thead>
      <tbody>
        <tr>
          <RowHead scope="row" $h={238}>1</RowHead>
          <BannerCell />
          <BannerCell colSpan={2} $tint>
            <Line>Group Information</Line>
            <Line $tone="#ff0000">Enter as on W9</Line>
            <Line $tone={ORANGE}>1) ONLY Populate if you have</Line>
            <Line $tone={ORANGE}>individuals who belong to groups.</Line>
            <Line $tone={ORANGE}>2) Data in these columns  must match</Line>
            <Line $tone={ORANGE}>data on "Group" tab to associate a</Line>
            <Line $tone={ORANGE}>Provider with a Group.</Line>
          </BannerCell>
          <BannerCell colSpan={10}>
            <Line>Provider Identification</Line>
            <Line $tone="#ff0000">Enter as on W9</Line>
          </BannerCell>
        </tr>
        <tr>
          <RowHead scope="row" $h={115}>2</RowHead>
          {headings.map((h, i) => (
            <HeadCell key={i} $thick={i === 2}>
              <HeadText>
                {h.lines.map(([text, kind], j) => (
                  <Line key={j} $tone={kind ? ORANGE : undefined} $italic={kind === 'i'}>
                    {h.star && j === 0 && <Star>*</Star>}
                    {text}
                  </Line>
                ))}
              </HeadText>
            </HeadCell>
          ))}
        </tr>
        <tr>
          <RowHead scope="row" $h={48}>3</RowHead>
          {record.map((v, i) => <Cell key={i} $tint={i === 1 || i === 2} $thick={i === 2} $right={i === 10}>{v}</Cell>)}
        </tr>
        {emptyRows.map((n) => (
          <tr key={n ?? 'last'}>
            <RowHead scope="row" $h={24} $on={n === 7}>{n}</RowHead>
            {columns.map(([c], i) => (
              <Cell key={c} $tint={i === 1 || i === 2} $thick={i === 2}>
                {n === 7 && c === 'F' && (
                  <>
                    <Selection />
                    <Tip role="tooltip">
                      <TipTitle>Middle Name</TipTitle>
                      <TipText>Individual Middle Name (Text - Optional)</TipText>
                    </Tip>
                  </>
                )}
              </Cell>
            ))}
          </tr>
        ))}
      </tbody>
    </Sheet>
  </SheetView>
);

const VScroll = styled.div`
  display: flex;
  flex-direction: column;
  width: 19px;
  margin: 2px 3px 0 3px;
  background: #dadada;
`;
const ScrollButton = styled.button`
  display: grid;
  place-items: center;
  width: 19px;
  height: 18px;
  flex: none;
  border: 1px solid #ababab;
  background: #fdfdfd;
`;
const VThumb = styled.div`
  height: 20px;
  margin-top: 2px;
  border: 1px solid #ababab;
  background: #fff;
`;
const Spacer = styled.span`
  flex: 1;
`;
const Triangle = ({ d, w = 10, h = 6, fill = '#666' }: { d: string; w?: number; h?: number; fill?: string }) => (
  <Svg w={w} h={h} fill={fill}><path d={d} /></Svg>
);

/* ---------- sheet tabs ---------- */

const SheetBar = styled.div`
  display: flex;
  align-items: flex-start;
  height: 29px;
  flex: none;
  padding-right: 25px;
  border-bottom: 1px solid #c6c6c6;
  background: #e6e6e6;
`;
const TabNav = styled.div`
  display: flex;
  align-items: center;
  gap: 22px;
  width: 103px;
  height: 26px;
  padding-left: 28px;
`;
const TabLine = styled.span`
  width: 1px;
  height: 21px;
  margin: 3px 2px 0 0;
  background: #9b9b9b;
  & ~ & { margin: 3px 2px 0 2px; }
`;
const SheetTab = styled.button<{ $bg: string; $w: number }>`
  width: ${(p) => p.$w}px;
  height: 23px;
  margin-top: 2px;
  padding-bottom: 6px;
  background: ${(p) => p.$bg};
  color: #222;
  font-size: 16px;
  line-height: 17px;
  white-space: nowrap;
`;
const ActiveTab = styled.button`
  width: 105px;
  height: 25px;
  margin: 0 2px;
  padding: 0 0 4px;
  border: 2px solid #fff;
  border-bottom: 2px solid ${GREEN};
  border-top: 0;
  box-shadow: inset 0 -1px 0 #fff;
  background: linear-gradient(#fff, #8fd9f5);
  color: ${GREEN};
  font-size: 16px;
  line-height: 19px;
  font-weight: 700;
`;
const NewSheet = styled.button`
  margin: 4px 0 0 31px;
`;
const HScroll = styled.div`
  display: flex;
  width: 729px;
  height: 19px;
  margin: 4px 0 0 14px;
  background: #dadada;
`;
const HThumb = styled.div`
  width: 190px;
  border: 1px solid #ababab;
  background: #fff;
`;
const BarGrip = styled.span`
  margin-top: 7px;
`;

const SheetTabs = () => (
  <SheetBar>
    <TabNav>
      <button aria-label="Previous sheet"><Triangle w={5} h={9} d="M5 0v9L0 4.500z" fill="#bdbdbd" /></button>
      <button aria-label="Next sheet"><Triangle w={5} h={9} d="M0 0v9l5-4.500z" fill="#bdbdbd" /></button>
    </TabNav>
    <TabLine />
    <SheetTab $bg="#ffff00" $w={112}>Instructions</SheetTab>
    <TabLine />
    <SheetTab $bg="#92d050" $w={69}>Group</SheetTab>
    <ActiveTab>Individual</ActiveTab>
    <SheetTab $bg="#ffc000" $w={213}>Hospital_Ancillary_Clinic</SheetTab>
    <TabLine />
    <NewSheet aria-label="New sheet">
      <Svg w={20} h={20} stroke="#7f7f7f" strokeWidth="1.300">
        <circle cx="10" cy="10" r="9.300" /><path d="M10 5v10M5 10h10" strokeWidth="2" />
      </Svg>
    </NewSheet>
    <Spacer />
    <BarGrip><GripDots /></BarGrip>
    <HScroll>
      <ScrollButton aria-label="Scroll left"><Triangle w={6} h={10} d="M6 0v10L0 5z" /></ScrollButton>
      <HThumb />
      <Spacer />
      <ScrollButton aria-label="Scroll right"><Triangle w={6} h={10} d="M0 0v10l6-5z" /></ScrollButton>
    </HScroll>
  </SheetBar>
);

/* ---------- status bar ---------- */

const StatusBar = styled.footer`
  display: flex;
  align-items: center;
  justify-content: flex-end;
  height: 27px;
  flex: none;
  padding-right: 11px;
  background: #f3f2f1;
`;
const ViewButton = styled.button<{ $on?: boolean }>`
  display: grid;
  place-items: center;
  width: 50px;
  height: 27px;
  background: ${(p) => (p.$on ? '#c8c6c4' : 'none')};
`;
const ZoomButton = styled.button`
  display: grid;
  place-items: center;
  width: 23px;
  height: 27px;
`;
const Zoom = styled.input`
  appearance: none;
  width: 125px;
  height: 20px;
  margin: 0;
  background: linear-gradient(#b0aeac, #b0aeac) center / 100% 1px no-repeat;
  &::-webkit-slider-thumb {
    appearance: none;
    width: 6px;
    height: 14px;
    background: #6b6967;
  }
`;
const ZoomText = styled.span`
  width: 41px;
  text-align: right;
  font-size: 12px;
`;

const Status = () => (
  <StatusBar>
    <ViewButton $on aria-label="Normal view">
      <Svg w={18} h={18} stroke="#444" strokeWidth="1.500"><path d="M1 1h16v16H1zM1 6.500h16M1 11.500h16M6.500 1v16M11.500 1v16" /></Svg>
    </ViewButton>
    <ViewButton aria-label="Page layout view">
      <Svg w={18} h={18} stroke="#666" strokeWidth="1.500"><path d="M1 1h16v16H1zM4.500 4h9v10h-9zM6.500 7h5M6.500 9h5M6.500 11h5" /></Svg>
    </ViewButton>
    <ViewButton aria-label="Page break view">
      <Svg w={18} h={18} stroke="#666" strokeWidth="1.500"><path d="M1 1h16v16H1zM1 10.500h10V1M6 1v9" /></Svg>
    </ViewButton>
    <ZoomButton aria-label="Zoom out"><Svg w={10} h={2} fill="#444"><path d="M0 0h10v1.500H0z" /></Svg></ZoomButton>
    <Zoom type="range" min={0} max={100} defaultValue={50} aria-label="Zoom" />
    <ZoomButton aria-label="Zoom in"><Svg w={10} h={10} stroke="#444" strokeWidth="1.300"><path d="M0 5h10M5 0v10" /></Svg></ZoomButton>
    <ZoomText>100%</ZoomText>
  </StatusBar>
);

/* ---------- taskbar ---------- */

const Taskbar = styled.nav`
  display: flex;
  height: 50px;
  flex: none;
  background: linear-gradient(90deg, #2f2a29, #292625 140px, #3a3938 250px, #3c3b3a 380px, #372a2a 450px, #352828 540px, #3b3a3a 640px, #2d2a2a 760px, #393030 950px, #3a2f2f 1130px, #404040 1230px, #414141);
`;
const StartButton = styled.button`
  display: grid;
  place-items: center;
  width: 60px;
`;
const AppButton = styled.button<{ $on?: boolean; $multi?: boolean }>`
  display: grid;
  place-items: center;
  width: ${(p) => (p.$on ? 61 : 51)}px;
  margin: ${(p) => (p.$on ? '0 -5px' : '0')};
  border-bottom: 3px solid #76b9ed;
  background: ${(p) => (p.$on ? 'linear-gradient(90deg, #666262 56px, #444 56px, #444 57px, #575353 57px)' : 'none')};
  ${(p) => p.$multi && css`
    border-image: linear-gradient(90deg, #76b9ed 40px, #4a7090 40px, #5a8fb8 41px) 3;
    border-width: 0 0 3px;
  `}
`;
const Apps = styled.div`
  display: flex;
  gap: 11px;
  padding-left: 9px;
`;
const Tray = styled.div`
  display: flex;
  align-items: center;
  margin-left: auto;
`;
const TrayIcon = styled.button`
  display: grid;
  place-items: center;
  width: 30px;
  height: 50px;
`;
const Clock = styled.button`
  width: 86px;
  color: #fff;
  font-size: 14px;
  line-height: 23px;
  text-align: center;
  white-space: nowrap;
`;
const Notice = styled.button`
  display: grid;
  place-items: center;
  width: 60px;
  height: 50px;
  border-right: 1px solid #777;
  margin-right: 4px;
`;
const White = '#fff';
const Tile = ({ letter, color }: { letter: string; color: string }) => (
  <>
    <rect x="0" y="7" width="15" height="15" rx="1" fill={color} />
    <text x="7.500" y="19" textAnchor="middle" fontFamily="Open Sans, sans-serif" fontWeight="700" fontSize="12" fill={White}>{letter}</text>
  </>
);

const TeamsMark = () => (
  <>
    <circle cx="16" cy="5" r="4.500" fill="#7b83eb" /><circle cx="25" cy="6" r="3" fill="#5059c9" />
    <path d="M20 11h9v8a5 5 0 0 1-9 2z" fill="#5059c9" /><path d="M9 11h13v9a7 7 0 0 1-13 3z" fill="#7b83eb" />
    <Tile letter="T" color="#4b53bc" />
    <circle cx="24" cy="23" r="6" fill="#fff" /><circle cx="24" cy="23" r="5" fill="#6bb700" />
    <path d="m21 23 2 2 4-4" stroke="#fff" strokeWidth="1.500" fill="none" />
  </>
);
const OutlookMark = () => (
  <>
    <path d="M9 1h19v16H9z" fill="#0f5fb5" /><path d="M19 1h9v8h-9z" fill="#32a8e8" /><path d="M9 8h10v9H9z" fill="#1683d8" /><path d="M19 6h9v9h-9z" fill="#50d9ff" />
    <path d="M7 14l11 6 11-6v13H7z" fill="#1a8fe3" /><path d="M29 14v13H12z" fill="#35b0f0" />
    <Tile letter="O" color="#0f62b8" />
  </>
);
const Stripes = ({ c }: { c: string[] }) => (
  <>{c.map((fill, i) => <rect key={fill} x="7" y={1 + i * 6.5} width="22" height="6.600" fill={fill} />)}</>
);

const apps: { name: string; multi?: boolean; on?: boolean; art: React.ReactNode }[] = [
  { name: 'File Explorer', multi: true, art: <>
    <path d="M1 3h11l2 3h14v4H1z" fill="#e09a1a" /><path d="M1 7h27v17H1z" fill="#ffd05c" />
    <path d="M6 25V14h17v11h-4v-6h-9v6z" fill="#3f97dc" />
  </> },
  { name: 'Internet Explorer', multi: true, art: <>
    <path d="M15 3a12 12 0 1 0 11 17h-7c-3 3-8 1-8-3h16C28 9 23 3 15 3zm-4 9c1-5 8-5 9 0z" fill="#3cc3f5" />
    <path d="M28 8c0-7-7-6-14-2C6 11-1 21 1 26c1 3 5 2 8 0" fill="none" stroke="#f4c521" strokeWidth="2" />
  </> },
  { name: 'Teams', art: <TeamsMark /> },
  { name: 'Outlook', multi: true, art: <OutlookMark /> },
  { name: 'Word', multi: true, art: <><Stripes c={['#41a5ee', '#2b7cd3', '#185abd', '#103f91']} /><Tile letter="W" color="#185abd" /></> },
  { name: 'Chrome', art: <>
    <circle cx="15" cy="14" r="13.500" fill="#fbc93c" />
    <path d="M15 .5A13.500 13.500 0 0 1 26.700 7.500H15a6.500 6.500 0 0 0-6 4.500L3.300 7.500A13.500 13.500 0 0 1 15 .5z" fill="#dd5144" />
    <path d="M3.300 7.500 9.200 17a6.500 6.500 0 0 0 9 3L13 27.400A13.500 13.500 0 0 1 3.300 7.500z" fill="#1da05f" />
    <circle cx="15" cy="14" r="6.300" fill="#fff" /><circle cx="15" cy="14" r="5" fill="#4c8bf5" />
  </> },
  { name: 'Excel', on: true, art: <>
    <Stripes c={['#21a366', '#1a9058', '#107c41', '#185c37']} /><path d="M18 1h11v6.500H18z" fill="#33c481" /><path d="M18 7.500h11V14H18z" fill="#21a366" />
    <Tile letter="X" color="#107c41" />
  </> },
  { name: 'MongoDB Compass', multi: true, art: <>
    <circle cx="14" cy="14" r="13.500" fill="#fff" /><path d="M14 6c5 5 5 11 0 16-5-5-5-11 0-16z" fill="#12a64a" />
  </> },
  { name: 'Postman', art: <>
    <circle cx="15" cy="14" r="14.500" fill="#fff" /><circle cx="15" cy="14" r="13.800" fill="#ff6c37" />
    <path d="M7 23l5-7 6-5 2 2-5 6zM18 10l5-4" stroke="#fff" strokeWidth="2" fill="#ffd9c8" /><circle cx="22" cy="7" r="2.500" fill="#fff" />
  </> },
  { name: 'Notepad', art: <>
    <path d="M9 2l17 2-1 22-8-1z" fill="#d8c58a" /><path d="M10 2l15 2-4 23-19-6z" fill="#6fb9cc" /><path d="M10 2l15 2-2 9-16-3z" fill="#b9dde6" />
    <path d="M11 2l14 2" stroke="#666" strokeWidth="2" strokeDasharray="1 1" />
  </> },
  { name: 'Notepad++', art: <>
    <path d="M3 2h17l4 4v22H3z" fill="#f4f8e8" /><path d="M3 17h20v11H3z" fill="#7ac520" /><path d="M3 2h18" stroke="#888" strokeWidth="2" strokeDasharray="2 1" />
    <path d="M6 13c3-3 9-3 10 0s-8 3-9 6c3 3 8 2 9-1M11 9c1-2 5-1 4 3" stroke="#1d5c16" strokeWidth="1.300" fill="none" /><circle cx="10" cy="16" r="3" fill="#49a820" />
    <path d="M28 2 21 18l-1 4 3-3 6-16z" fill="#e8a32a" />
  </> },
  { name: 'Paint', art: <>
    <path d="M14 5c8-1 13 4 12 10-1 7-7 12-13 11-4-1-1-5-4-6s-7 0-8-4C0 11 6 6 14 5z" fill="#b9dcf2" />
    <circle cx="9" cy="12" r="2.200" fill="#59b83f" /><circle cx="15" cy="9" r="2.200" fill="#f4b72a" /><circle cx="5" cy="17" r="2" fill="#e04a3a" /><circle cx="12" cy="17" r="2" fill="#333" />
    <path d="M24 5 15 28" stroke="#d98232" strokeWidth="2.500" /><path d="M22 1l6 2-2 6-4-2z" fill="#a3754a" />
  </> },
];

const tray: { name: string; art: React.ReactNode }[] = [
  { name: 'Removed device', art: <><path d="M1 12l6-6h8l4 3-6 5z" fill="#ddd" /><path d="M3 11l11 1 4-3" stroke="#777" fill="none" /><path d="M1 13l13 2v3L1 15z" fill="#999" /><path d="m12 11 7 7M19 11l-7 7" stroke="#e81123" strokeWidth="2.500" /></> },
  { name: 'Security agent', art: <><path d="M13 6c0-4-7-4-7 0s7 4 7 8-7 4-7 0l4-6" stroke="#111" strokeWidth="6" fill="none" /><path d="M13 6c0-4-7-4-7 0s7 4 7 8-7 4-7 0l4-6" stroke="#eee" strokeWidth="2.600" fill="none" /></> },
  { name: 'OneNote clipper', art: <><path d="M1 3l12-2v17L1 16z" fill="#80397b" /><path d="M4 13V6l5 7V6M11 3l7 10M18 3l-8 10" stroke="#fff" strokeWidth="1.700" fill="none" /><circle cx="10" cy="16" r="2.200" stroke="#fff" strokeWidth="1.500" fill="none" /><circle cx="17" cy="16" r="2.200" stroke="#fff" strokeWidth="1.500" fill="none" /></> },
  { name: 'Key manager', art: <><circle cx="10" cy="10" r="9.800" fill="#fff" /><circle cx="10" cy="10" r="8" stroke="#1c7cc7" strokeWidth="1.500" fill="none" /><circle cx="8" cy="7.500" r="2.500" stroke="#1c7cc7" strokeWidth="2" fill="none" /><path d="m9 10 5 6" stroke="#1c7cc7" strokeWidth="2" /></> },
  { name: 'Snagit', art: <><rect width="20" height="20" rx="2" fill="#f4503f" /><path d="M16 4H5v5h10v6H4" stroke="#fff" strokeWidth="3" fill="none" /></> },
  { name: 'OneDrive', art: <><path d="M4 16a4 4 0 0 1 0-8c2-6 10-6 12 0 5 0 5 8 0 8z" fill="#1583d8" /><path d="M2 14 11 9l8 5c-1 2-2 2-3 2H4z" fill="#28a8ea" /></> },
  { name: 'Teams status', art: <g transform="scale(.69)"><TeamsMark /></g> },
  { name: 'Outlook status', art: <g transform="scale(.66)"><OutlookMark /></g> },
  { name: 'Headset', art: <><path d="M3 14V9a7 7 0 0 1 14 0v5" stroke="#fff" strokeWidth="2" fill="none" /><path d="M1 9h3v7H2zM16 9h3l-1 7h-2z" fill="#fff" /><path d="m6.500 11 6 7M12.500 11l-6 7" stroke="#fff" strokeWidth="2" /></> },
  { name: 'VPN', art: <><circle cx="9" cy="10" r="8.500" fill="#cfd6d0" /><path d="M2 6c5-5 9 0 6 4s-5 1-6-4z" fill="#4a9b3b" /><rect x="9" y="10" width="9" height="9" fill="#f2b33d" stroke="#444" /><path d="M11 10V6c0-3 5-3 5 0v4" stroke="#eee" strokeWidth="1.500" fill="none" /></> },
  { name: 'Windows', art: <><path d="M0 0h20v20H0z" fill="#fff" /><path d="M3 5l6-1v6H3zM10 4l7-1v7h-7zM3 10.700h6V16.500l-6-1zM10 10.700h7V17.500l-7-1z" fill="#00adef" /></> },
  { name: 'Alarm', art: <><path d="M1 2h5v5H1zM14 2h5v5h-5zM4 16l3 2-3 2zM16 16l-3 2 3 2z" fill="#4bb7ea" /><circle cx="10" cy="10" r="8.500" fill="#4bb7ea" /><circle cx="10" cy="10" r="6" fill="#fff" /><path d="m6 8 4 3 4-2" stroke="#e04a3a" fill="none" /></> },
  { name: 'Bluetooth', art: <><rect x="2.500" width="15" height="20" rx="7.500" fill="#0a84ff" /><path d="m6 6.500 8 7-4 3.500V3l4 3.500-8 7" stroke="#fff" strokeWidth="1.300" fill="none" /></> },
  { name: 'Citrix', art: <><path d="M0 0h20v20H0z" fill="#4aa82e" /><path d="M4 8h5v9H4zM9 13h3V6H8v2M12 6l4-3M13 3h3v3" stroke="#fff" strokeWidth="1.400" fill="none" /></> },
  { name: 'Network monitor', art: <><path d="M2 14 7 8l5 7 5-9" stroke="#555d66" strokeWidth="2" fill="none" /><path d="M2 14l3-5" stroke="#f07c22" strokeWidth="3" /><circle cx="17" cy="6" r="2" stroke="#1b8ca6" strokeWidth="1.500" fill="none" /></> },
  { name: 'Antivirus', art: <><path d="M2 1h16v10c0 4-3 6-8 8-5-2-8-4-8-8z" fill="#d9a93c" /><path d="M6 1h3v16H6zM12 1h3v15h-3z" fill="#f5dc92" /><circle cx="14" cy="14.500" r="4" fill="#1d9a24" /></> },
  { name: 'Battery', art: <><path d="M6 6.500h12v8H4M19 9v3" stroke="#fff" strokeWidth="1.400" fill="none" /><path d="M8 8.500h8.500v4.500H8z" fill="#fff" /><path d="M1 3v3h5V3M3.500 6v8M2 1v3M5 1v3" stroke="#fff" fill="none" /></> },
  { name: 'Network', art: <><path d="M6 4h13v10H4M11 14v4M7 18h9M1 2h4v4H1zM3 6v12" stroke="#fff" strokeWidth="1.300" fill="none" /></> },
  { name: 'Volume', art: <><path d="M1 8h3l4-4v12l-4-4H1zM11 8c1 1 1 3 0 4M14 6c2 2 2 6 0 8M16.500 3.500c4 4 4 9 0 13" stroke="#fff" strokeWidth="1.300" fill="none" /></> },
];

const TaskbarView = () => (
  <Taskbar>
    <StartButton aria-label="Start">
      <Svg w={20} h={20} fill="#fff"><path d="M0 3l8.500-1.200v8H0zM9.500 1.600 20 0v9.800H9.500zM0 10.700h8.500v8L0 17.500zM9.500 10.700H20V20L9.500 18.800z" /></Svg>
    </StartButton>
    <StartButton aria-label="Search">
      <Svg w={20} h={20} stroke="#fff" strokeWidth="1.500"><circle cx="12" cy="7.500" r="6.500" /><path d="M7.500 12.500 1 19.500" /></Svg>
    </StartButton>
    <StartButton aria-label="Task view">
      <Svg w={20} h={20} stroke="#fff" strokeWidth="1.400"><path d="M1 1v3h12V1M1 7h12v6H1zM1 19v-3h12v3M18 1v3M18 9v10" /><path d="M17 5h2v3h-2z" fill="#fff" /></Svg>
    </StartButton>
    <Apps>
      {apps.map((a) => (
        <AppButton key={a.name} aria-label={a.name} $multi={a.multi} $on={a.on}>
          <Svg w={30} h={29}>{a.art}</Svg>
        </AppButton>
      ))}
    </Apps>
    <Tray>
      {tray.map((t) => (
        <TrayIcon key={t.name} aria-label={t.name}><Svg w={20} h={20}>{t.art}</Svg></TrayIcon>
      ))}
      <Clock>2:57 PM<br />6/10/2021</Clock>
      <Notice aria-label="Notifications">
        <Svg w={34} h={32}>
          <path d="M1 1h20v16H9v5l-5-5H1z" fill="#fff" /><path d="M4 5h14M4 9h14M4 13h8" stroke="#444" strokeWidth="1.500" />
          <circle cx="20" cy="19" r="11.500" fill="#3b3b3b" stroke="#9a9a9a" />
          <text x="20" y="24" textAnchor="middle" fontFamily="Open Sans, sans-serif" fontSize="14" fontWeight="600" fill="#fff">40</text>
        </Svg>
      </Notice>
    </Tray>
  </Taskbar>
);

export default function App() {
  return (
    <Window>
      <Global />
      <TitleArea />
      <Tabs />
      <Ribbon />
      <FormulaBar />
      <Workspace>
        <Grid />
        <VScroll>
          <ScrollButton aria-label="Scroll up"><Triangle d="M0 6h10L5 0z" /></ScrollButton>
          <VThumb />
          <Spacer />
          <ScrollButton aria-label="Scroll down"><Triangle d="M0 0h10L5 6z" /></ScrollButton>
        </VScroll>
      </Workspace>
      <SheetTabs />
      <Status />
      <TaskbarView />
    </Window>
  );
}
